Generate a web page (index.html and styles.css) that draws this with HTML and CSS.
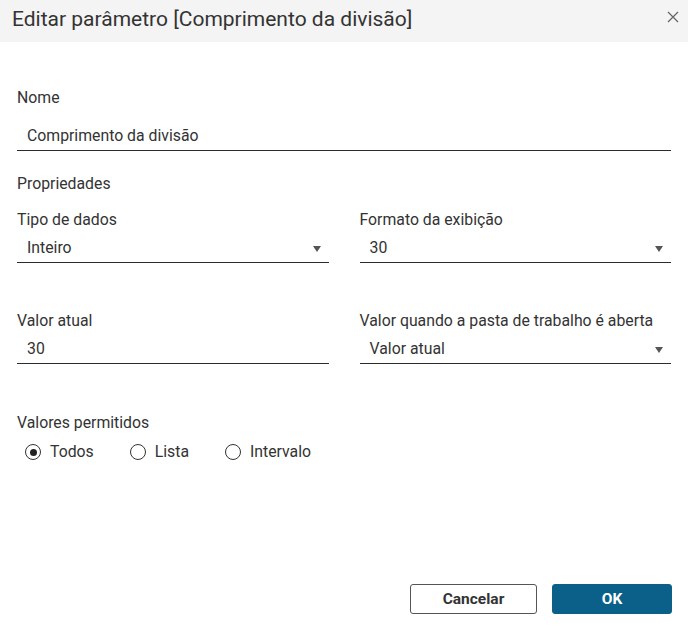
FILE: index.html
```html
<!DOCTYPE html>
<html lang="pt">
<head>
<meta charset="utf-8">
<title>Editar parâmetro</title>
<link rel="stylesheet" href="styles.css">
</head>
<body>
<div class="dialog">
  <div class="header">
    <div class="title">Editar parâmetro [Comprimento da divisão]</div>
    <svg class="close" width="12" height="12" viewBox="0 0 12 12"><path d="M1 1L11 11M11 1L1 11" stroke="#666" stroke-width="1.3" fill="none"/></svg>
  </div>
  <div class="content">
    <div class="label first">Nome</div>
    <div class="field name">Comprimento da divisão</div>
    <div class="section">Propriedades</div>
    <div class="grid">
      <div class="cell">
        <div class="label">Tipo de dados</div>
        <div class="field select"><span>Inteiro</span><span class="arrow"></span></div>
      </div>
      <div class="cell">
        <div class="label">Formato da exibição</div>
        <div class="field select"><span>30</span><span class="arrow"></span></div>
      </div>
      <div class="cell row2">
        <div class="label">Valor atual</div>
        <div class="field"><span>30</span></div>
      </div>
      <div class="cell row2">
        <div class="label">Valor quando a pasta de trabalho é aberta</div>
        <div class="field select"><span>Valor atual</span><span class="arrow"></span></div>
      </div>
    </div>
    <div class="label allowed">Valores permitidos</div>
    <div class="radios">
      <label class="radio"><span class="circle checked"></span>Todos</label>
      <label class="radio"><span class="circle"></span>Lista</label>
      <label class="radio"><span class="circle"></span>Intervalo</label>
    </div>
  </div>
  <div class="footer">
    <button class="btn cancel">Cancelar</button>
    <button class="btn ok">OK</button>
  </div>
</div>
</body>
</html>
```

FILE: styles.css
```css
html, body {
  margin: 0;
  padding: 0;
  background: #fff;
}
body {
  font-family: Roboto, "Liberation Sans", sans-serif;
  font-size: 15.8px;
  color: #333;
}
.dialog {
  width: 688px;
  height: 632px;
  display: flex;
  flex-direction: column;
}
.header {
  height: 42px;
  background: #f4f4f4;
  display: flex;
  align-items: center;
  justify-content: space-between;
  padding: 0 8px 0 12px;
}
.title {
  font-size: 21px;
  line-height: 38px;
  margin-top: -4px;
  color: #333;
}
.close {
  margin-top: -8px;
  margin-right: 1px;
}
.content {
  padding: 0 17px;
}
.label {
  line-height: 20px;
  color: #333;
}
.label.first {
  margin-top: 46px;
}
.field {
  line-height: 20px;
  padding: 0 10px 4px 10px;
  border-bottom: 1px solid #2b2b2b;
  display: flex;
  justify-content: space-between;
  align-items: center;
  margin-top: 8px;
}
.field.name {
  margin-top: 18px;
  padding-bottom: 4px;
}
.section {
  margin-top: 23px;
  line-height: 20px;
}
.grid {
  display: grid;
  grid-template-columns: 1fr 1fr;
  column-gap: 31px;
  margin-top: 16px;
}
.row2 {
  margin-top: 48px;
}
.select {
  padding-right: 8px;
}
.arrow {
  width: 0;
  height: 0;
  border-left: 4.5px solid transparent;
  border-right: 4.5px solid transparent;
  border-top: 6px solid #555;
  margin-top: 1px;
}
.allowed {
  margin-top: 49px;
}
.radios {
  display: flex;
  gap: 36px;
  padding-left: 8px;
  margin-top: 9px;
}
.radio {
  display: flex;
  align-items: center;
  gap: 9px;
  line-height: 20px;
}
.circle {
  width: 16px;
  height: 16px;
  box-sizing: border-box;
  border: 1px solid #333;
  border-radius: 50%;
  display: flex;
  align-items: center;
  justify-content: center;
}
.circle.checked::after {
  content: "";
  width: 7px;
  height: 7px;
  border-radius: 50%;
  background: #222;
}
.footer {
  margin-top: auto;
  display: flex;
  justify-content: flex-end;
  gap: 15px;
  padding: 0 16px 18px 0;
}
.btn {
  font-family: Roboto, "Liberation Sans", sans-serif;
  font-size: 15.5px;
  font-weight: bold;
  height: 30px;
  border-radius: 3px;
  cursor: pointer;
}
.cancel {
  width: 127px;
  background: #fff;
  border: 1px solid #555;
  color: #333;
}
.ok {
  width: 120px;
  background: #0b6089;
  border: 1px solid #0b6089;
  color: #fff;
}
```
